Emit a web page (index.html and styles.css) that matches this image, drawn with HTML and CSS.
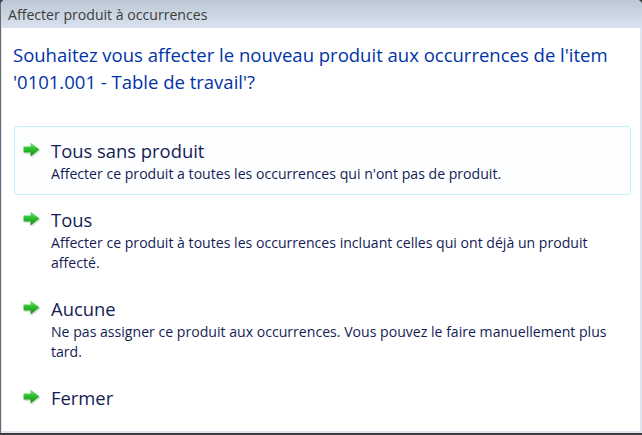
FILE: index.html
```html
<!DOCTYPE html>
<html lang="fr">
<head>
    <meta charset="UTF-8">
    <title>Affecter produit à occurrences</title>
    <link rel="stylesheet" href="styles.css">
</head>
<body>
    <div class="window">
        <div class="titlebar">Affecter produit à occurrences</div>
        <div class="frame">
            <div class="content">
                <div class="instruction">Souhaitez vous affecter le nouveau produit aux occurrences de l'item '0101.001 - Table de travail'?</div>

                <div class="commands">
                    <div class="command selected">
                        <svg class="arrow" width="19" height="17" viewBox="0 0 19 17">
                            <defs>
                                <linearGradient id="g1" x1="0" y1="0" x2="0" y2="1">
                                    <stop offset="0" stop-color="#86e886"/>
                                    <stop offset="0.45" stop-color="#2fbf2f"/>
                                    <stop offset="1" stop-color="#118a11"/>
                                </linearGradient>
                            </defs>
                            <path d="M1.5 6 H8.5 V2 L17.5 9 L8.5 16 V12 H1.5 Z" fill="#8a8a8a" opacity="0.3"/>
                            <path d="M0.5 4.5 H7.5 V0.5 L16.5 7.5 L7.5 14.5 V10.5 H0.5 Z" fill="url(#g1)"/>
                        </svg>
                        <div class="command-text">
                            <div class="command-title">Tous sans produit</div>
                            <div class="command-desc">Affecter ce produit a toutes les occurrences qui n'ont pas de produit.</div>
                        </div>
                    </div>

                    <div class="command">
                        <svg class="arrow" width="19" height="17" viewBox="0 0 19 17">
                            <path d="M1.5 6 H8.5 V2 L17.5 9 L8.5 16 V12 H1.5 Z" fill="#8a8a8a" opacity="0.3"/>
                            <path d="M0.5 4.5 H7.5 V0.5 L16.5 7.5 L7.5 14.5 V10.5 H0.5 Z" fill="url(#g1)"/>
                        </svg>
                        <div class="command-text">
                            <div class="command-title">Tous</div>
                            <div class="command-desc">Affecter ce produit à toutes les occurrences incluant celles qui ont déjà un produit affecté.</div>
                        </div>
                    </div>

                    <div class="command">
                        <svg class="arrow" width="19" height="17" viewBox="0 0 19 17">
                            <path d="M1.5 6 H8.5 V2 L17.5 9 L8.5 16 V12 H1.5 Z" fill="#8a8a8a" opacity="0.3"/>
                            <path d="M0.5 4.5 H7.5 V0.5 L16.5 7.5 L7.5 14.5 V10.5 H0.5 Z" fill="url(#g1)"/>
                        </svg>
                        <div class="command-text">
                            <div class="command-title">Aucune</div>
                            <div class="command-desc">Ne pas assigner ce produit aux occurrences. Vous pouvez le faire manuellement plus tard.</div>
                        </div>
                    </div>

                    <div class="command">
                        <svg class="arrow" width="19" height="17" viewBox="0 0 19 17">
                            <path d="M1.5 6 H8.5 V2 L17.5 9 L8.5 16 V12 H1.5 Z" fill="#8a8a8a" opacity="0.3"/>
                            <path d="M0.5 4.5 H7.5 V0.5 L16.5 7.5 L7.5 14.5 V10.5 H0.5 Z" fill="url(#g1)"/>
                        </svg>
                        <div class="command-text">
                            <div class="command-title">Fermer</div>
                        </div>
                    </div>
                </div>
            </div>
        </div>
    </div>
</body>
</html>
```

FILE: styles.css
```css
body {
    margin: 0;
    height: 435px;
    overflow: hidden;
    background-color: #3b3b3b;
    font-family: "Open Sans", "Noto Sans", sans-serif;
}

.window {
    width: 641px;
    height: 433px;
    display: flex;
    flex-direction: column;
    border-left: 1px solid #6a6a6a;
    border-radius: 5px 5px 0 0;
    background-color: #dde6f0;
    overflow: hidden;
}

.titlebar {
    height: 28px;
    flex-shrink: 0;
    padding-left: 7px;
    display: flex;
    align-items: center;
    font-size: 14.1px;
    color: #3c3c3c;
    background: linear-gradient(to bottom, #bcc7d5, #d9e3ef);
}

.frame {
    flex: 1;
    display: flex;
    padding: 0 2px 2px 1px;
}

.content {
    flex: 1;
    background-color: #fff;
    padding: 13px 9px 0 11px;
}

.instruction {
    font-size: 18.5px;
    line-height: 27px;
    color: #0033a8;
    margin-bottom: 31px;
}

.commands {
    display: flex;
    flex-direction: column;
}

.command {
    display: flex;
    align-items: flex-start;
    gap: 9px;
    padding: 11px 10px 10px 8px;
    border: 1px solid transparent;
    border-radius: 3px;
    margin-left: 1px;
}

.command.selected {
    border-color: #c4effc;
    background-color: #fcfeff;
}

.arrow {
    flex-shrink: 0;
    margin-top: 4px;
}

.command-title {
    font-size: 18.4px;
    line-height: 26px;
    color: #151c55;
}

.command-desc {
    font-size: 14.1px;
    line-height: 20px;
    color: #151c55;
}
```
